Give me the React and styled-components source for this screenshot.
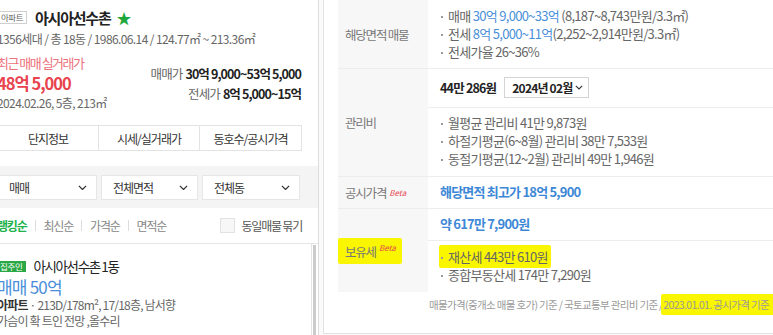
import React from "react";
import styled, { createGlobalStyle } from "styled-components";

const GlobalStyle = createGlobalStyle`
  html, body {
    margin: 0;
    padding: 0;
    background: #fff;
    overflow: hidden;
  }
  body {
    font-family: "Noto Sans CJK KR", "Noto Sans", sans-serif;
    color: #333;
  }
  * { box-sizing: border-box; }
`;

// Layout
const Page = styled.div`
  display: flex;
  width: 776px;
  height: 335px;
  margin-left: -3px;
  background: #fafafa;
  overflow: hidden;
`;

const LeftPanel = styled.section`
  flex: 0 0 319px;
  display: flex;
  flex-direction: column;
  background: #fff;
  border-right: 1px solid #dcdcdc;
`;

const Gutter = styled.div`
  flex: 0 0 4px;
`;

const RightPanel = styled.section`
  flex: 0 0 520px;
  display: flex;
  flex-direction: column;
  background: #fff;
  border-left: 1px solid #e2e2e2;
  border-bottom: 1px solid #e2e2e2;
  height: 334px;
  padding-left: 14px;
`;

// Left summary
const Summary = styled.div`
  padding: 6px 15px 0 0;
`;

const TitleRow = styled.div`
  display: flex;
  align-items: center;
  height: 22px;
  gap: 8px;
`;

const TypeTag = styled.span`
  font-size: 8.5px;
  color: #666;
  border: 1px solid #cfcfcf;
  height: 13px;
  line-height: 11px;
  padding: 0 3px;
  letter-spacing: -0.5px;
`;

const Title = styled.h1`
  margin: 0;
  font-size: 15px;
  font-weight: 700;
  color: #222;
  letter-spacing: -1.2px;
`;

const Star = styled.span`
  color: #1ea83c;
  font-size: 15px;
  margin-left: -2px;
`;

const Meta = styled.div`
  font-size: 12px;
  line-height: ${({ $lh }) => $lh || 18}px;
  color: #666;
  letter-spacing: -0.6px;
  margin-top: ${({ $mt }) => $mt || 0}px;
`;

const DealRow = styled.div`
  display: flex;
  justify-content: space-between;
  margin-top: 6px;
`;

const RecentLabel = styled.div`
  font-size: 13px;
  line-height: 18px;
  color: #ec727b;
  letter-spacing: -1.5px;
`;

const RecentPrice = styled.div`
  font-size: 16.5px;
  line-height: 22px;
  font-weight: 700;
  color: #e8434e;
  letter-spacing: -1px;
`;

const Ranges = styled.div`
  padding: 10px 2px 0 0;
  text-align: right;
`;

const RangeLine = styled.div`
  font-size: 12.5px;
  line-height: 20px;
  color: #666;
  letter-spacing: -0.9px;

  b {
    color: #222;
    font-weight: 700;
    margin-left: 3px;
  }
`;

const Tabs = styled.div`
  display: grid;
  grid-template-columns: 100px 101px 102px;
  height: 26px;
  margin: 13px 16px 0 0;
  border: 1px solid #e3e3e3;
`;

const Tab = styled.div`
  display: flex;
  align-items: center;
  justify-content: center;
  font-size: 12px;
  color: #333;
  letter-spacing: -1px;
  & + & {
    border-left: 1px solid #e3e3e3;
  }
`;

const FilterBar = styled.div`
  display: grid;
  grid-template-columns: 100px 97px 98px;
  gap: 4px;
  margin-top: 15px;
  padding: 9px 0 8px;
  background: #f4f4f4;
`;

const Select = styled.div`
  height: 25px;
  display: flex;
  align-items: center;
  justify-content: space-between;
  padding: 0 9px 0 11px;
  background: #fff;
  border: 1px solid #e6e6e6;
  font-size: 12px;
  color: #333;
  letter-spacing: -1px;
`;

const Chevron = ({ size = 9 }) => (
  <svg width={size} height={size * 0.6} viewBox="0 0 10 6" fill="none">
    <path d="M1 1l4 4 4-4" stroke="#333" strokeWidth="1.4" />
  </svg>
);

const SortBar = styled.div`
  display: flex;
  align-items: center;
  justify-content: space-between;
  height: 36px;
  padding-right: 16px;
  border-bottom: 1px solid #e6e6e6;
`;

const SortList = styled.div`
  display: flex;
  align-items: center;
  gap: 8px;
  font-size: 12px;
  letter-spacing: -1.2px;
`;

const SortItem = styled.span`
  color: ${({ $active }) => ($active ? "#20b24b" : "#888")};
  font-weight: ${({ $active }) => ($active ? 700 : 400)};
`;

const Divider = styled.span`
  width: 1px;
  height: 11px;
  background: #ddd;
`;

const GroupCheck = styled.label`
  display: flex;
  align-items: center;
  gap: 6px;
  font-size: 12px;
  color: #555;
  letter-spacing: -1.2px;
`;

const CheckBox = styled.span`
  width: 15px;
  height: 15px;
  border: 1px solid #e2e2e2;
  background: #f7f7f7;
`;

const ListArea = styled.div`
  flex: 1;
  display: flex;
  padding-right: 2px;
`;

const Item = styled.div`
  flex: 1;
  padding-top: 12px;
`;

const ScrollTrack = styled.div`
  width: 5px;
  border-left: 1px solid #e4e4e4;
  display: flex;
  flex-direction: column;
  padding-top: 1px;

  &::after {
    content: "";
    flex: 1;
    background: #cbcbcb;
    margin-left: 1px;
  }
`;

const ItemTitle = styled.div`
  display: flex;
  align-items: center;
  gap: 8px;
  height: 20px;
`;

const OwnerTag = styled.span`
  background: #2aa845;
  color: #fff;
  font-size: 8.5px;
  line-height: 11px;
  height: 11px;
  padding: 0 3px;
  letter-spacing: -0.3px;
`;

const ItemName = styled.span`
  font-size: 13.5px;
  color: #222;
  letter-spacing: -1.4px;
`;

const ItemPrice = styled.div`
  font-size: 17px;
  line-height: 21px;
  color: #4a8fd8;
  letter-spacing: -0.8px;
`;

const ItemMeta = styled.div`
  font-size: 12px;
  line-height: 16px;
  color: #666;
  letter-spacing: -0.8px;

  b {
    color: #333;
    font-weight: 700;
  }
`;

// Right info table
const InfoTable = styled.div`
  display: grid;
  grid-template-columns: 90px 1fr;
`;

const Label = styled.div`
  display: flex;
  align-items: center;
  padding-left: 7px;
  background: #f7f7f7;
  font-size: 12.5px;
  color: #777;
  letter-spacing: -1.2px;
  border-top: ${({ $first }) => ($first ? "none" : "1px solid #ededed")};

  sup {
    color: #e8434e;
    font-style: italic;
    font-size: 8px;
    margin-left: 3px;
    letter-spacing: 0;
  }
`;

const Cell = styled.div`
  border-top: ${({ $first }) => ($first ? "none" : "1px solid #ededed")};
`;

const Sub = styled.div`
  display: flex;
  align-items: center;
  gap: 8px;
  padding: ${({ $pad }) => $pad || "6px 0 8px"};
  padding-left: 12px;
  & + & {
    border-top: 1px solid #ededed;
  }
`;

const Bullets = styled.ul`
  margin: 0;
  padding: 0;
  list-style: none;
`;

const Bullet = styled.li`
  position: relative;
  padding-left: 8px;
  font-size: 13px;
  line-height: 18px;
  color: #666;
  letter-spacing: -0.7px;

  &::before {
    content: "";
    position: absolute;
    left: 1px;
    top: 9px;
    width: 2px;
    height: 2px;
    background: #999;
  }
`;

const Blue = styled.span`
  color: ${({ $dark }) => ($dark ? "#3d88d6" : "#4a90d9")};
  font-weight: ${({ $bold }) => ($bold ? 700 : 400)};
`;

const Strong = styled.span`
  font-size: ${({ $size }) => $size || 13}px;
  line-height: 18px;
  font-weight: 700;
  color: #222;
  letter-spacing: -0.8px;
`;

const MonthSelect = styled.div`
  display: flex;
  align-items: center;
  gap: 3px;
  height: 21px;
  padding: 0 5px 0 7px;
  border: 1px solid #d4d4d4;
  font-size: 12px;
  font-weight: 700;
  color: #222;
  letter-spacing: -0.8px;
`;

const Marker = styled.span`
  background: #f9f600;
  padding: ${({ $pad }) => $pad || "2px 3px"};
  margin: ${({ $m }) => $m || "0 -3px"};
  border-radius: 2px;
`;

const Footnote = styled.div`
  margin-top: 6px;
  padding-left: 91px;
  font-size: 10.5px;
  line-height: 14px;
  color: #999;
  letter-spacing: -0.65px;
  white-space: nowrap;
`;

const rowsOne = [
  <>매매 <Blue>30억 9,000~33억</Blue> (8,187~8,743만원/3.3㎡)</>,
  <>전세 <Blue>8억 5,000~11억</Blue>(2,252~2,914만원/3.3㎡)</>,
  <>전세가율 26~36%</>,
];

const fees = [
  "월평균 관리비 41만 9,873원",
  "하절기평균(6~8월) 관리비 38만 7,533원",
  "동절기평균(12~2월) 관리비 49만 1,946원",
];

export default function App() {
  return (
    <>
      <GlobalStyle />
      <Page>
        <LeftPanel>
          <Summary>
            <TitleRow>
              <TypeTag>아파트</TypeTag>
              <Title>아시아선수촌</Title>
              <Star>★</Star>
            </TitleRow>
            <Meta $mt={2}>1356세대 / 총 18동 / 1986.06.14 / 124.77㎡ ~ 213.36㎡</Meta>
            <DealRow>
              <div>
                <RecentLabel>최근 매매 실거래가</RecentLabel>
                <RecentPrice>48억 5,000</RecentPrice>
                <Meta>2024.02.26, 5층, 213㎡</Meta>
              </div>
              <Ranges>
                <RangeLine>매매가<b>30억 9,000~53억 5,000</b></RangeLine>
                <RangeLine>전세가<b>8억 5,000~15억</b></RangeLine>
              </Ranges>
            </DealRow>
          </Summary>

          <Tabs>
            <Tab>단지정보</Tab>
            <Tab>시세/실거래가</Tab>
            <Tab>동호수/공시가격</Tab>
          </Tabs>

          <FilterBar>
            {["매매", "전체면적", "전체동"].map((label) => (
              <Select key={label}>
                {label}
                <Chevron />
              </Select>
            ))}
          </FilterBar>

          <SortBar>
            <SortList>
              <SortItem $active>랭킹순</SortItem>
              <Divider />
              <SortItem>최신순</SortItem>
              <Divider />
              <SortItem>가격순</SortItem>
              <Divider />
              <SortItem>면적순</SortItem>
            </SortList>
            <GroupCheck>
              <CheckBox />
              동일매물 묶기
            </GroupCheck>
          </SortBar>

          <ListArea>
            <Item>
              <ItemTitle>
                <OwnerTag>집주인</OwnerTag>
                <ItemName>아시아선수촌 1동</ItemName>
              </ItemTitle>
              <ItemPrice>매매 50억</ItemPrice>
              <ItemMeta><b>아파트</b> · 213D/178m², 17/18층, 남서향</ItemMeta>
              <ItemMeta>가슴이 확 트인 전망 ,올수리</ItemMeta>
            </Item>
            <ScrollTrack />
          </ListArea>
        </LeftPanel>

        <Gutter />

        <RightPanel>
          <InfoTable>
            <Label $first>해당면적 매물</Label>
            <Cell $first>
              <Sub $pad="7px 0 7px">
                <Bullets>
                  {rowsOne.map((r, i) => (
                    <Bullet key={i}>{r}</Bullet>
                  ))}
                </Bullets>
              </Sub>
            </Cell>

            <Label>관리비</Label>
            <Cell>
              <Sub $pad="8px 0 9px">
                <Strong $size={12.5}>44만 286원</Strong>
                <MonthSelect>
                  2024년 02월
                  <Chevron size={8} />
                </MonthSelect>
              </Sub>
              <Sub>
                <Bullets>
                  {fees.map((f) => (
                    <Bullet key={f}>{f}</Bullet>
                  ))}
                </Bullets>
              </Sub>
            </Cell>

            <Label>
              공시가격<sup>Beta</sup>
            </Label>
            <Cell>
              <Sub $pad="6px 0 7px">
                <Strong><Blue $dark $bold>해당면적 최고가 18억 5,900</Blue></Strong>
              </Sub>
            </Cell>

            <Label>
              <Marker $pad="4px 6px 3px 7px" $m="0 -6px 0 -7px">
                보유세<sup>Beta</sup>
              </Marker>
            </Label>
            <Cell>
              <Sub $pad="6px 0 7px">
                <Strong><Blue $dark $bold>약 617만 7,900원</Blue></Strong>
              </Sub>
              <Sub $pad="7px 0 8px">
                <Bullets>
                  <Bullet>
                    <Marker $pad="2px 3px 2px 9px" $m="0 -3px 0 -9px">재산세 443만 610원</Marker>
                  </Bullet>
                  <Bullet>종합부동산세 174만 7,290원</Bullet>
                </Bullets>
              </Sub>
            </Cell>
          </InfoTable>
          <Footnote>
            매물가격(중개소 매물 호가) 기준 / 국토교통부 관리비 기준 /{" "}
            <Marker $pad="3px 8px 3px 2px">2023.01.01. 공시가격 기준</Marker>
          </Footnote>
        </RightPanel>
      </Page>
    </>
  );
}
